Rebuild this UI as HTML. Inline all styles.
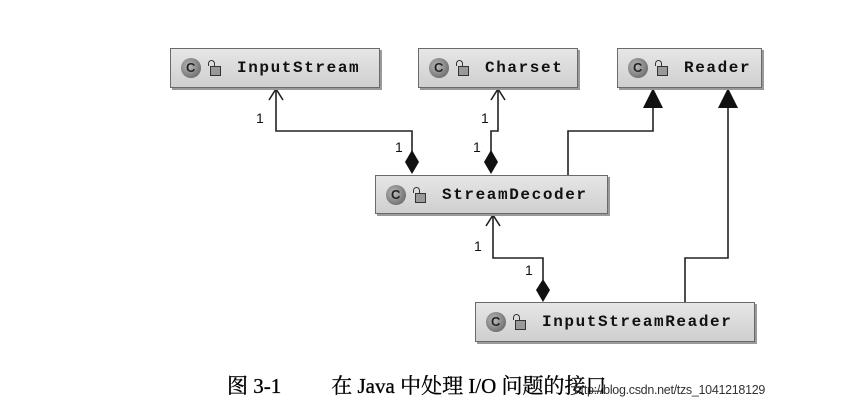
<!DOCTYPE html>
<html><head><meta charset="utf-8"><style>
body{margin:0;width:859px;height:411px;background:#fff;position:relative;overflow:hidden}
.b{position:absolute;box-sizing:border-box;border:1px solid #6a6a6a;background:linear-gradient(#e6e6e6,#cfcfcf);box-shadow:2px 2px 0 #9a9a9a;display:flex;align-items:center;font-family:"Liberation Mono",monospace;font-weight:bold;font-size:16px;letter-spacing:1.6px;color:#111}
.ic{width:20px;height:20px;border-radius:50%;background:radial-gradient(circle at 40% 40%,#bbb,#555);margin-left:10px;margin-right:9px;position:relative;flex:none}
.ic:after{content:"C";position:absolute;left:5px;top:2px;font-size:13px;letter-spacing:0;color:#222;font-family:"Liberation Sans",sans-serif}
.lk{width:9px;height:8px;border:1px solid #333;background:#999;margin-right:16px;position:relative;margin-top:6px;flex:none}
.lk:before{content:"";position:absolute;left:-3px;top:-7px;width:5px;height:5px;border:1.5px solid #333;border-bottom:none;border-radius:4px 4px 0 0}
.n{position:absolute;font-family:"Liberation Sans",sans-serif;font-size:14px;color:#111}
</style></head><body>
<svg width="859" height="411" style="position:absolute;left:0;top:0">
<g fill="none" stroke="#222" stroke-width="1.6">
<path d="M276 89V131H412V152"/>
<path d="M269 100L276 89L283 100"/>
<path d="M498 89V131H491V152"/>
<path d="M491 100L498 89L505 100"/>
<path d="M568 175V131H653V106"/>
<path d="M685 302V258H728V106"/>
<path d="M493 215V258H543V280"/>
<path d="M486 226L493 215L500 226"/>
</g>
<g fill="#111">
<path d="M412 150L419 162L412 174L405 162Z"/>
<path d="M491 150L498 162L491 174L484 162Z"/>
<path d="M543 279L550 290L543 302L536 290Z"/>
<path d="M653 88L663 108L643 108Z"/>
<path d="M728 88L738 108L718 108Z"/>
</g>
</svg>
<div class="b" style="left:170px;top:48px;width:210px;height:40px"><span class="ic"></span><span class="lk"></span>InputStream</div>
<div class="b" style="left:418px;top:48px;width:160px;height:40px"><span class="ic"></span><span class="lk"></span>Charset</div>
<div class="b" style="left:617px;top:48px;width:145px;height:40px"><span class="ic"></span><span class="lk"></span>Reader</div>
<div class="b" style="left:375px;top:175px;width:233px;height:39px"><span class="ic"></span><span class="lk"></span>StreamDecoder</div>
<div class="b" style="left:475px;top:302px;width:280px;height:40px"><span class="ic"></span><span class="lk"></span>InputStreamReader</div>
<div class="n" style="left:256px;top:110px">1</div>
<div class="n" style="left:395px;top:139px">1</div>
<div class="n" style="left:481px;top:110px">1</div>
<div class="n" style="left:473px;top:139px">1</div>
<div class="n" style="left:474px;top:238px">1</div>
<div class="n" style="left:525px;top:262px">1</div>
<div style="position:absolute;left:227px;top:370px;font-family:'Liberation Serif','Noto Serif CJK SC',serif;font-size:21px;color:#000;white-space:nowrap;-webkit-text-stroke:0.3px #000">图 3-1<span style="display:inline-block;width:50px"></span>在 Java 中处理 I/O 问题的接口</div>
<div style="position:absolute;left:574px;top:383px;font-family:'Liberation Sans',sans-serif;font-size:12.5px;color:#333;letter-spacing:-0.3px;white-space:nowrap">http://blog.csdn.net/tzs_1041218129</div>
</body></html>
